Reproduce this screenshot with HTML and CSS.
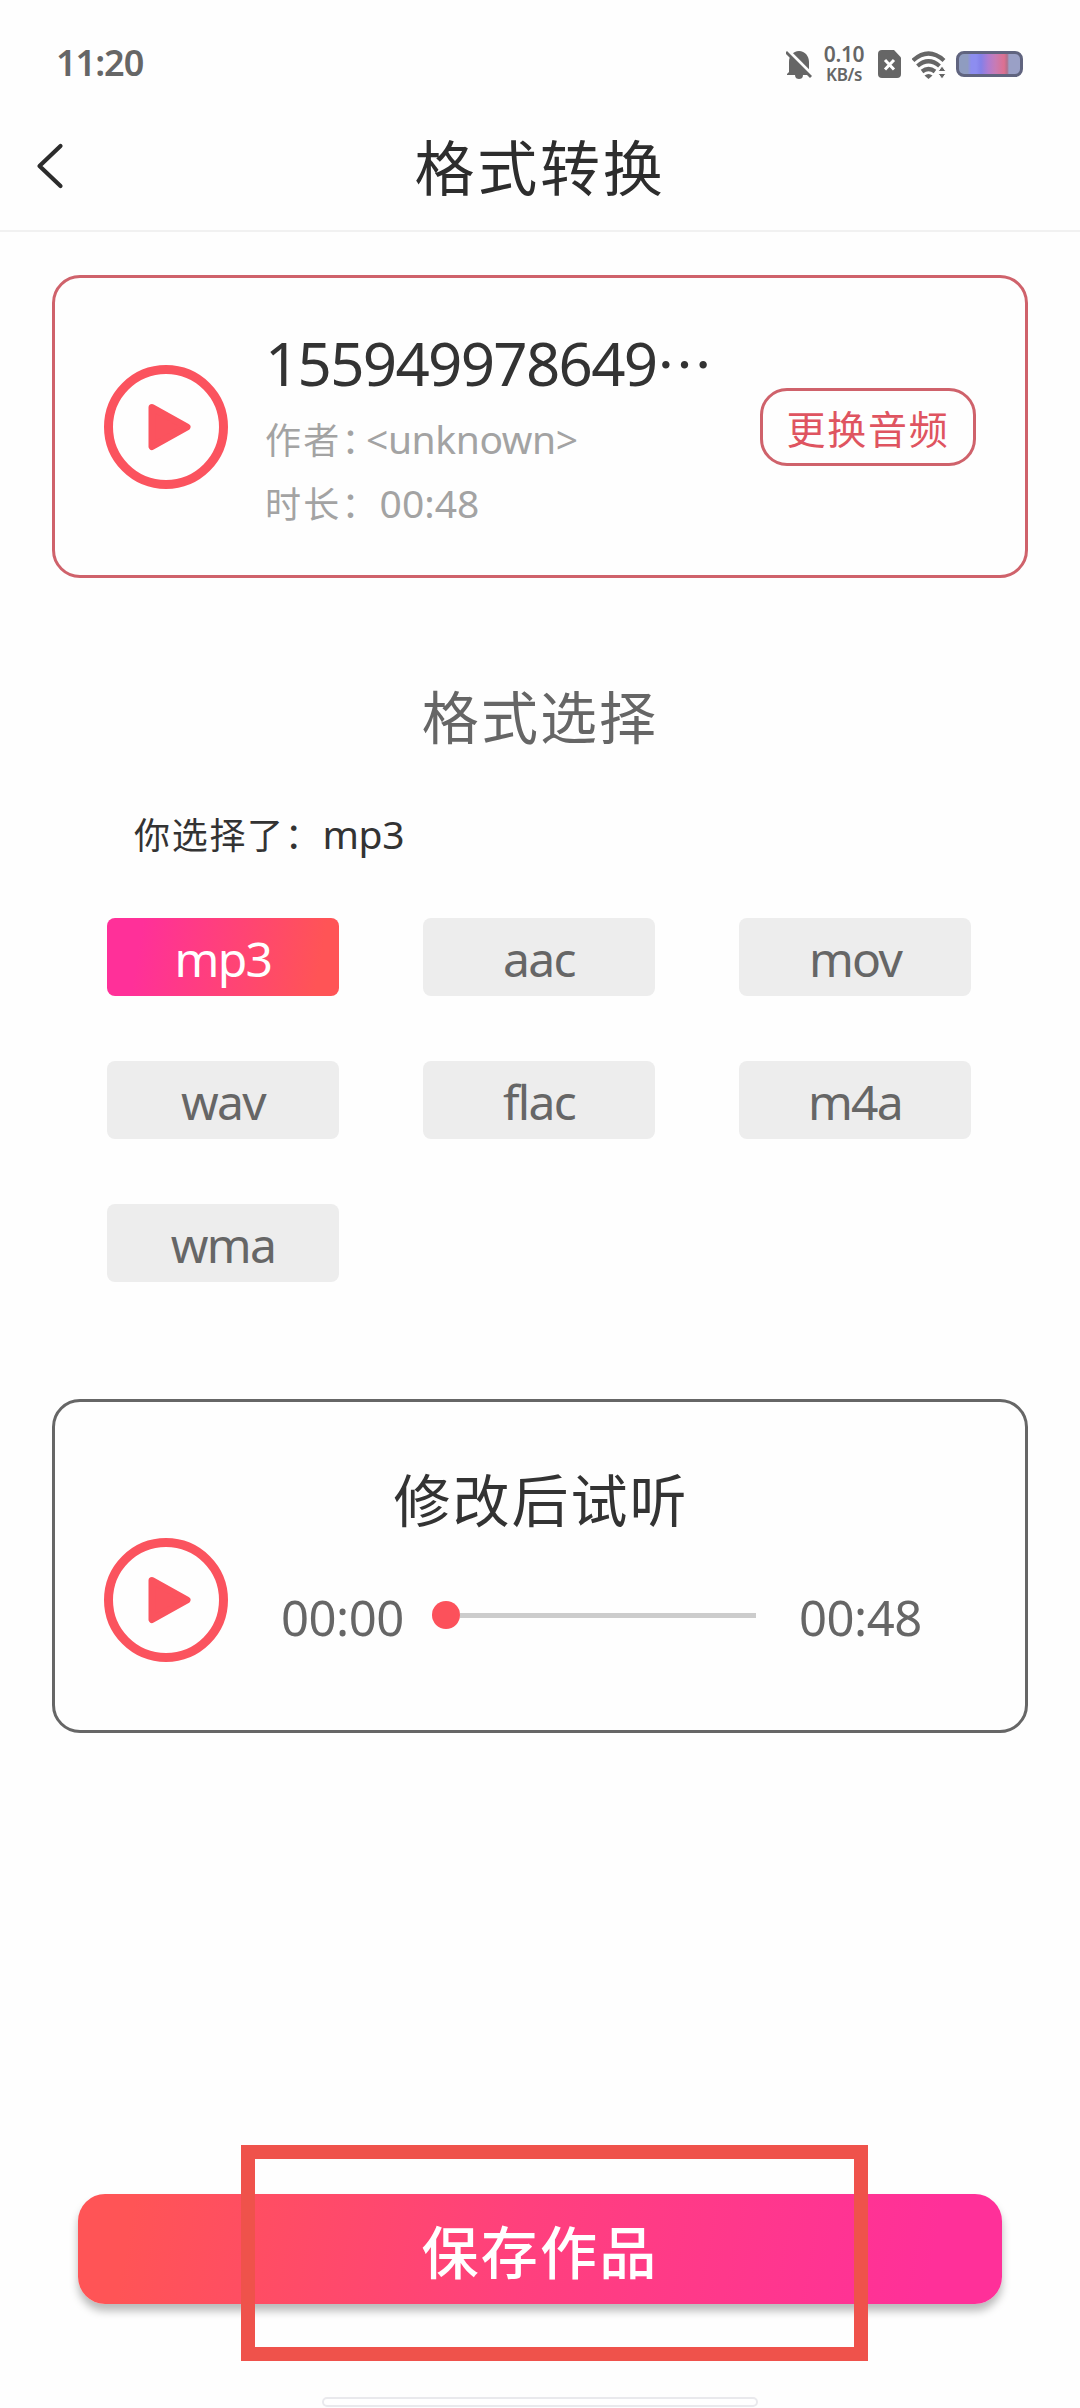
FILE: index.html
```html
<!DOCTYPE html>
<html lang="zh-CN">
<head>
<meta charset="utf-8">
<title>格式转换</title>
<link rel="stylesheet" href="styles.css">
</head>
<body>
<div class="screen">
  <div class="statusbar">
    <span class="clock">11:20</span>
    <div class="status-icons">
      <svg class="ic-bell" width="26" height="30" viewBox="0 0 26 30">
        <path d="M3 22V12C3 6 7 1 13 1s10 5 10 11v10l2 2v1H1v-1z" fill="#666"/>
        <path d="M9 25h8c0 3-2 4-4 4s-4-1-4-4z" fill="#666"/>
        <path d="M0 -1L26 25" stroke="#fefefe" stroke-width="4"/>
        <path d="M0 2L25 27" stroke="#666" stroke-width="2.800"/>
      </svg>
      <div class="netspeed"><span class="rate">0.10</span><span class="unit">KB/s</span></div>
      <svg class="ic-sim" width="24" height="28" viewBox="0 0 24 28">
        <path d="M4 0h12l7 7.500V24a4 4 0 0 1-4 4H4a4 4 0 0 1-4-4V4a4 4 0 0 1 4-4z" fill="#666"/>
        <path d="M7 10l9 9.500M16 10l-9 9.500" stroke="#fff" stroke-width="3"/>
      </svg>
      <svg class="ic-wifi" width="34" height="28" viewBox="0 0 34 28">
        <g fill="none" stroke="#666" stroke-width="4.200">
          <path d="M1 9.500Q16.500-4.500 32 9.500"/>
          <path d="M5.500 15Q16.500 5.500 27.500 15"/>
          <path d="M10 20.500Q16.500 15.500 23 20.500"/>
        </g>
        <path d="M12.500 24.500q4-3 8 0L16.500 28z" fill="#666"/>
        <path d="M26 20.500l4-5.500 4 5.500zM26 22.500h8l-4 5.500z" fill="#666" stroke="#fefefe" stroke-width="1"/>
      </svg>
      <div class="battery"></div>
    </div>
  </div>

  <header class="navbar">
    <svg class="back" width="28" height="46" viewBox="0 0 28 46">
      <path d="M24.500 3L3.500 23l21 20" fill="none" stroke="#2c2c2c" stroke-width="4.200" stroke-linecap="round" stroke-linejoin="round"/>
    </svg>
    <h1 class="title">格式转换</h1>
  </header>

  <section class="card source">
    <svg class="play" viewBox="0 0 124 124">
      <circle cx="62" cy="62" r="57.500" fill="none" stroke="#fb535e" stroke-width="9"/>
      <path d="M48 42.500L83 62 48 81.500z" fill="#fb535e" stroke="#fb535e" stroke-width="7" stroke-linejoin="round"/>
    </svg>
    <div class="info">
      <div class="filename">155949978649<span class="dots">…</span></div>
      <div class="meta author"><span class="label">作者：</span><span class="latin">&lt;unknown&gt;</span></div>
      <div class="meta length"><span class="label">时长：</span><span class="latin">00:48</span></div>
    </div>
    <button class="swap">更换音频</button>
  </section>

  <h2 class="section-title">格式选择</h2>
  <p class="chosen"><span class="label">你选择了：</span><span class="latin">mp3</span></p>

  <div class="formats">
    <button class="chip active">mp3</button>
    <button class="chip">aac</button>
    <button class="chip">mov</button>
    <button class="chip">wav</button>
    <button class="chip">flac</button>
    <button class="chip">m4a</button>
    <button class="chip">wma</button>
  </div>

  <section class="card preview">
    <h2 class="preview-title">修改后试听</h2>
    <div class="player">
      <svg class="play" viewBox="0 0 124 124">
        <circle cx="62" cy="62" r="57.500" fill="none" stroke="#fb535e" stroke-width="9"/>
        <path d="M48 42.500L83 62 48 81.500z" fill="#fb535e" stroke="#fb535e" stroke-width="7" stroke-linejoin="round"/>
      </svg>
      <span class="time">00:00</span>
      <div class="slider"><span class="knob"></span><span class="track"></span></div>
      <span class="time">00:48</span>
    </div>
  </section>

  <div class="footer">
    <button class="save">保存作品</button>
    <div class="highlight"></div>
  </div>
  <div class="home"></div>
</div>
</body>
</html>
```
FILE: styles.css
```css
* { box-sizing: border-box; }

body {
  margin: 0;
  background: #fefefe;
  font-family: "Noto Sans", "Noto Sans CJK SC", sans-serif;
  color: #333;
}

h1, h2, p { margin: 0; font-weight: 400; }

button {
  font: inherit;
  padding: 0;
  border: 0;
  background: none;
  display: block;
}

.screen {
  width: 1080px;
  height: 2408px;
  display: flex;
  flex-direction: column;
  overflow: hidden;
}

/* status bar */
.statusbar {
  height: 127px;
  flex: none;
  padding: 0 57px 0 56px;
  display: flex;
  justify-content: space-between;
  align-items: flex-start;
}

.clock {
  margin-top: 38px;
  font-size: 36px;
  line-height: 50px;
  font-weight: 600;
  letter-spacing: -1px;
  color: #666;
}

.status-icons {
  display: flex;
  align-items: flex-start;
  padding-top: 50px;
}

.netspeed {
  width: 44px;
  margin: -6px 12px 0 10px;
  display: flex;
  flex-direction: column;
  align-items: center;
  font-weight: 600;
  color: #666;
}

.rate { font-size: 21px; line-height: 21px; letter-spacing: -0.3px; }
.unit { font-size: 17px; line-height: 19px; letter-spacing: -0.4px; }

.ic-wifi { margin: 1px 10px 0; }

.battery {
  width: 67px;
  height: 26px;
  margin-top: 1px;
  border: 3px solid #60647f;
  border-radius: 8px;
  background: linear-gradient(90deg, #8f9cc0 0 14%, #8d8df0 20% 28%, #8480e8 36%, #b07cd0 48%, #c87bb4 60%, #dd7090 74%, #b0708c 79%, #9aa0c6 82%);
}

/* title bar */
.navbar {
  height: 105px;
  flex: none;
  padding: 16px 36px 0;
  display: grid;
  grid-template-columns: 28px 1fr 28px;
  align-items: start;
  border-bottom: 2px solid #f1f1f1;
}

.title {
  margin-top: -16px;
  font-family: "Noto Sans CJK SC", sans-serif;
  font-size: 60px;
  line-height: 76px;
  letter-spacing: 2.8px;
  text-align: center;
  color: #2d2d2d;
}

/* cards */
.card {
  margin: 0 52px;
  flex: none;
  border: 3px solid #cf626b;
  border-radius: 28px;
}

.source {
  margin-top: 43px;
  height: 303px;
  padding: 0 49px;
  display: flex;
  align-items: center;
}

.play { width: 124px; height: 124px; flex: none; display: block; }

.info {
  width: 450px;
  height: 204px;
  margin-left: 37px;
  flex: none;
}

.filename {
  display: flex;
  height: 82px;
  font-size: 60px;
  line-height: 77px;
  letter-spacing: -1.7px;
  white-space: nowrap;
}

.dots {
  font-family: "Noto Sans CJK SC", sans-serif;
  font-size: 56px;
  line-height: 74px;
  letter-spacing: 0;
}

.meta {
  display: flex;
  height: 64px;
  font-size: 39px;
  line-height: 64px;
  white-space: nowrap;
  color: #a3a3a3;
}

.label {
  font-family: "Noto Sans CJK SC", sans-serif;
  font-size: 36px;
  line-height: 62px;
  letter-spacing: 2.2px;
}

.latin { letter-spacing: -0.4px; }
.author .label { font-feature-settings: "halt"; width: 101px; }
.length .latin { letter-spacing: 0; }

.swap {
  width: 216px;
  height: 78px;
  margin-left: auto;
  border: 3px solid #cf626b;
  border-radius: 27px;
  font-family: "Noto Sans CJK SC", sans-serif;
  font-size: 39px;
  line-height: 66px;
  letter-spacing: 1.8px;
  text-align: center;
  white-space: nowrap;
  color: #df5460;
}

/* format picker */
.section-title {
  margin-top: 98px;
  height: 78px;
  font-family: "Noto Sans CJK SC", sans-serif;
  font-size: 57px;
  line-height: 76px;
  letter-spacing: 2.1px;
  text-align: center;
  color: #666;
}

.chosen {
  margin: 50px 0 0 134px;
  height: 60px;
  display: flex;
  font-size: 39px;
  line-height: 60px;
}

.chosen .label { letter-spacing: 1.7px; line-height: 58px; }

.formats {
  margin: 54px 0 0 107px;
  display: grid;
  grid-template-columns: repeat(3, 232px);
  grid-auto-rows: 78px;
  gap: 65px 84px;
}

.chip {
  border-radius: 8px;
  background: #ededed;
  padding-top: 3px;
  font-size: 48px;
  line-height: 75px;
  letter-spacing: -1.7px;
  text-align: center;
  color: #666;
}

.chip.active {
  background: linear-gradient(100deg, #ff3099 15%, #ff5456 90%);
  color: #fff;
}

/* preview player */
.preview {
  margin-top: 117px;
  height: 334px;
  padding: 57px 49px 0;
  border-color: #666;
}

.preview-title {
  height: 79px;
  padding-left: 2px;
  font-family: "Noto Sans CJK SC", sans-serif;
  font-size: 57px;
  line-height: 76px;
  letter-spacing: 2px;
  text-align: center;
}

.player {
  display: flex;
  align-items: center;
  height: 124px;
}

.time {
  width: 122px;
  padding-top: 34px;
  font-size: 49px;
  line-height: 60px;
  letter-spacing: -0.5px;
  color: #666;
}

.player .play + .time { margin-left: 53px; }

.slider {
  width: 324px;
  margin: 30px 43px 0 29px;
  display: flex;
  align-items: center;
}

.knob {
  width: 28px;
  height: 28px;
  border-radius: 50%;
  background: #fc515b;
}

.track { flex: 1; height: 5px; background: #ccc; }

/* footer */
.footer {
  position: relative;
  margin-top: 461px;
  padding: 0 78px;
}

.save {
  width: 924px;
  height: 110px;
  border-radius: 27px;
  background: linear-gradient(100deg, #ff5456 6%, #ff407d 48%, #ff3099 92%);
  box-shadow: 0 7px 9px rgba(0, 0, 0, 0.27);
  font-family: "Noto Sans CJK SC", sans-serif;
  font-size: 57px;
  font-weight: 500;
  line-height: 104px;
  letter-spacing: 2.300px;
  text-align: center;
  color: #fff;
}

.highlight {
  position: absolute;
  left: 241px;
  top: -49px;
  width: 627px;
  height: 216px;
  border: 14px solid #ef524b;
}

.home {
  width: 436px;
  height: 10px;
  margin: 93px 0 0 322px;
  border: 2px solid #e9e9ed;
  border-radius: 5px;
  background: #fff;
}
```
